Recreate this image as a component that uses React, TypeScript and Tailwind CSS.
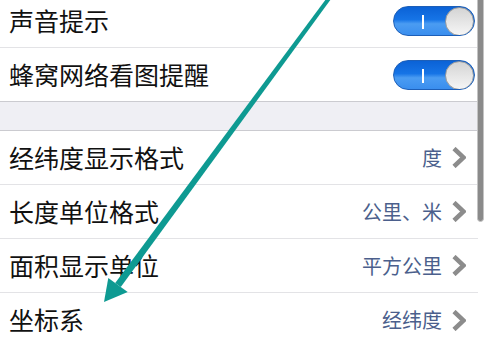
import type { FC } from "react";

const font = { fontFamily: '"Noto Sans CJK SC", "Noto Sans", sans-serif' };

const Toggle: FC = () => (
  <div className="relative w-[82px] h-[30px] rounded-full border border-[#1d5fb8] overflow-hidden bg-[linear-gradient(to_bottom,#0b62d6_0%,#1674e6_45%,#4b9cf2_60%,#3a8eee_100%)]">
    <div className="absolute left-[28px] top-[8px] w-[2px] h-[14px] bg-white" />
    <div className="absolute right-0 top-0 w-[29px] h-[29px] rounded-full border border-[#9a9a9a] bg-[linear-gradient(to_bottom,#d4d4d4,#f6f6f6)]" />
  </div>
);

const Chevron: FC = () => (
  <svg width="14" height="21" viewBox="0 0 14 21" className="shrink-0">
    <path d="M2 1.5 L11.5 10.5 L2 19.5" fill="none" stroke="#8c8c8c" strokeWidth="4.5" strokeLinejoin="miter" />
  </svg>
);

const ToggleRow: FC<{ label: string; h: string; last?: boolean }> = ({ label, h, last }) => (
  <div className={`flex items-center justify-between pl-[9px] pr-[3px] ${h} ${last ? "" : "border-b border-[#e3e3e6]"}`}>
    <span className="text-[25px] text-[#111]">{label}</span>
    <Toggle />
  </div>
);

const NavRow: FC<{ label: string; value: string; last?: boolean }> = ({ label, value, last }) => (
  <div className={`flex items-center justify-between pl-[9px] pr-[12px] h-[54px] ${last ? "" : "border-b border-[#e3e3e6]"}`}>
    <span className="text-[25px] text-[#111]">{label}</span>
    <div className="flex items-center gap-[10px]">
      <span className="text-[20px] text-[#4b5f8c]">{value}</span>
      <Chevron />
    </div>
  </div>
);

export default function App() {
  return (
    <div className="relative w-[486px] h-[339px] overflow-hidden bg-white" style={font}>
      <div className="-mt-[6px] w-[478px]">
        <ToggleRow label="声音提示" h="h-[54px]" />
        <ToggleRow label="蜂窝网络看图提醒" h="h-[53px]" last />
        <div className="h-[30px] bg-[#efeff4] border-y border-[#cbcbd0]" />
        <NavRow label="经纬度显示格式" value="度" />
        <NavRow label="长度单位格式" value="公里、米" />
        <NavRow label="面积显示单位" value="平方公里" />
        <NavRow label="坐标系" value="经纬度" last />
      </div>

      {/* scroll indicator */}
      <div className="absolute right-[2px] -top-[4px] w-[7px] h-[226px] rounded-full bg-[#8a8a8a] border border-[#c4c4c4]" />

      {/* annotation arrow */}
      <svg className="absolute inset-0" width="486" height="339" viewBox="0 0 486 339">
        <polygon points="331.6,-1.8 328.4,-4.2 115.2,282.9 120.8,287.1" fill="#0e9a92" />
        <polygon points="104,302 127.7,292.1 108.3,277.9" fill="#0e9a92" />
      </svg>
    </div>
  );
}
